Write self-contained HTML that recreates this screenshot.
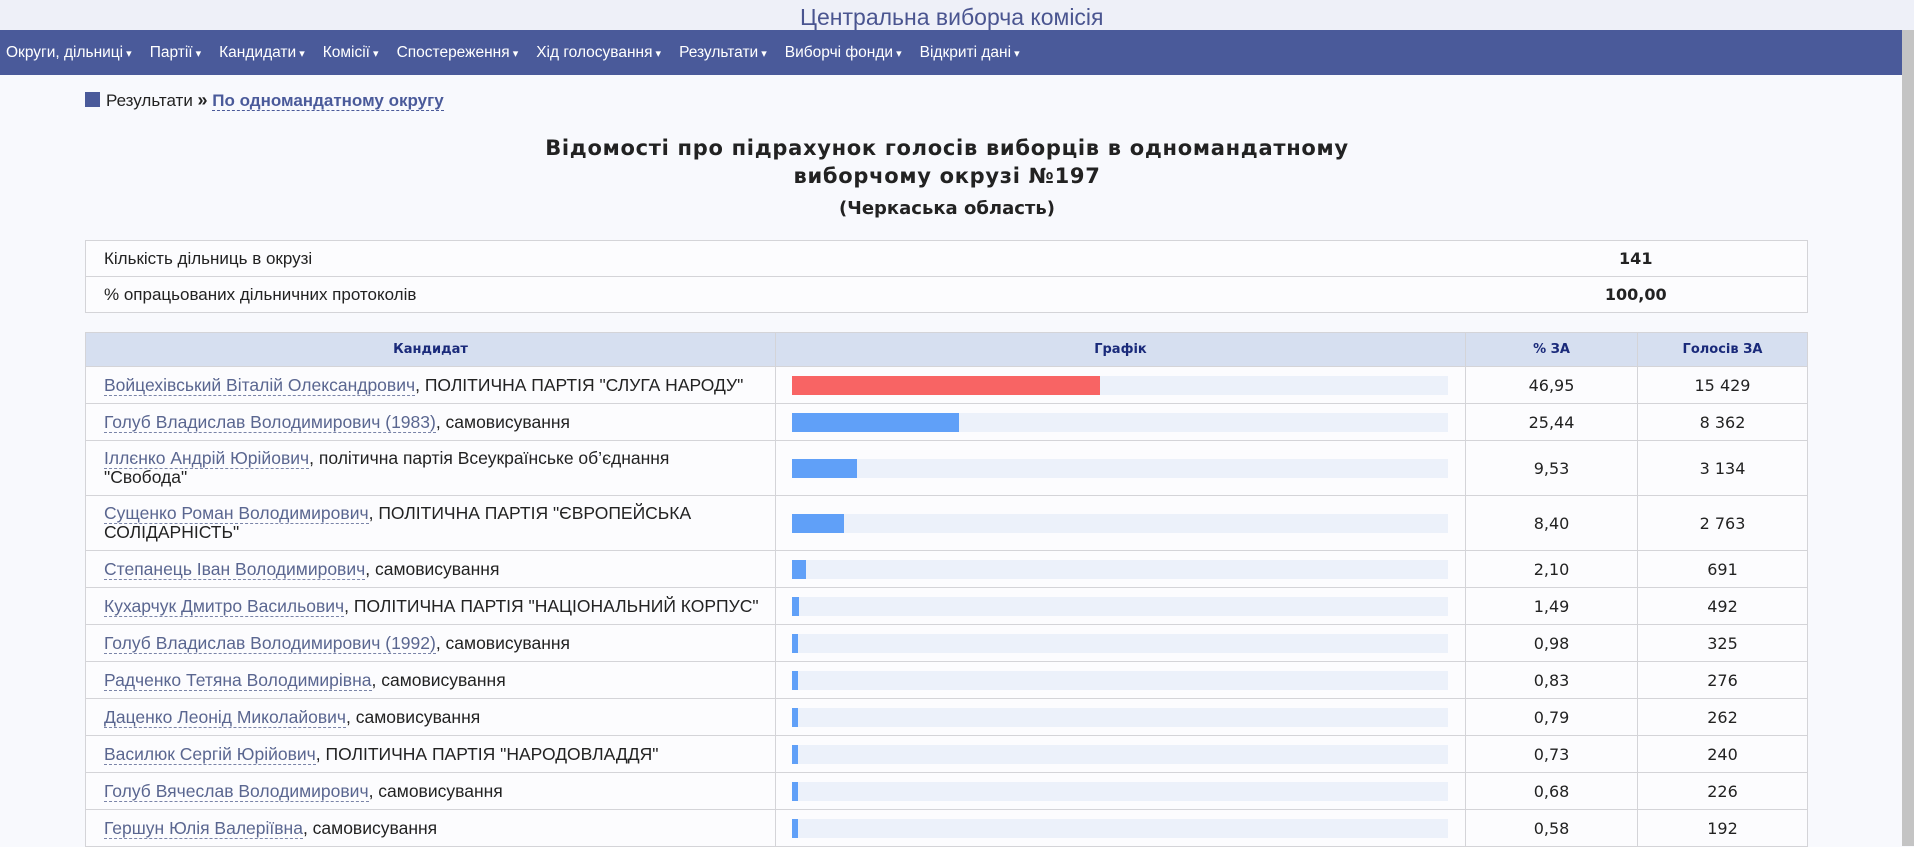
<!DOCTYPE html>
<html><head><meta charset="utf-8">
<style>
*{box-sizing:border-box;margin:0;padding:0}
body{width:1914px;height:846px;overflow:hidden;background:#f8f9fd;font-family:"Liberation Sans",sans-serif;color:#222;position:relative}
.top{height:30px;background:#eef0f8}
.top span{position:absolute;left:800px;top:1px;line-height:32px;font-size:23px;color:#4a5590}
.nav{position:absolute;top:30px;left:0;width:1902px;height:45px;background:#4a5a9a;color:#fff;font-size:15.5px;line-height:45px;padding-left:6px;white-space:nowrap}
.nav span{margin-right:18px}
.nav span:after{content:" ▾";font-size:11px}
.scroll{position:absolute;right:0;top:30px;width:12px;height:816px;background:#c4c4c4}
.bc{position:absolute;left:85px;top:90px;font-size:17px;color:#222}
.bc i{display:inline-block;width:15px;height:15px;background:#4a5a9a;vertical-align:-1px;margin-right:6px}
.bc b{font-size:18px}
.bc a{color:#4a5a9a;font-weight:bold;border-bottom:1px dashed #4a5a9a;text-decoration:none}
h1{position:absolute;left:0;width:1894px;top:134px;text-align:center;font-size:21px;line-height:28px;font-family:"DejaVu Sans",sans-serif;letter-spacing:0.7px}
h2{position:absolute;left:0;width:1894px;top:198px;text-align:center;font-size:18px;font-family:"DejaVu Sans",sans-serif}
table{position:absolute;left:85px;width:1723px;border-collapse:collapse;background:#fcfcfe;table-layout:fixed}
td,th{border:1px solid #d4d4d8}
.info{top:240px}
.info td{height:36px;font-size:17px;padding-left:18px;border-left:none;border-right:none}
.info td:first-child{border-left:1px solid #d4d4d8}
.info td.v{text-align:center;font-family:"DejaVu Sans",sans-serif;font-weight:bold;font-size:16px;padding:0;border-right:1px solid #d4d4d8}
.main{top:332px}
.main th{background:#d6dff0;color:#1a2a7a;font-family:"DejaVu Sans",sans-serif;font-size:13px;height:34px}
.main td{height:37px;font-size:17.5px;padding-left:18px;padding-right:10px;line-height:19px}
.main td.n{text-align:center;font-family:"DejaVu Sans",sans-serif;font-size:16px;padding:0;color:#222}
.main td.g{padding:0 16px}
.main a{color:#5a6690;text-decoration:none;border-bottom:1px dashed #7a84a8}
.tr{width:656px;height:19px;background:#ecf1fa}
.b{height:19px;background:#60a0f8}
tr.tall td{height:55px}
</style></head><body>
<div class="top"><span>Центральна виборча комісія</span></div>
<div class="nav"><span>Округи, дільниці</span><span>Партії</span><span>Кандидати</span><span>Комісії</span><span>Спостереження</span><span>Хід голосування</span><span>Результати</span><span>Виборчі фонди</span><span>Відкриті дані</span></div>
<div class="scroll"></div>
<div class="bc"><i></i>Результати <b>»</b> <a>По одномандатному округу</a></div>
<h1>Відомості про підрахунок голосів виборців в одномандатному<br>виборчому окрузі №197</h1>
<h2>(Черкаська область)</h2>
<table class="info">
<colgroup><col><col style="width:343px"></colgroup>
<tr><td>Кількість дільниць в окрузі</td><td class="v">141</td></tr>
<tr><td>% опрацьованих дільничних протоколів</td><td class="v">100,00</td></tr>
</table>
<table class="main">
<colgroup><col style="width:690px"><col style="width:690px"><col style="width:172px"><col></colgroup>
<tr><th>Кандидат</th><th>Графік</th><th>% ЗА</th><th>Голосів ЗА</th></tr>
<tr><td><a>Войцехівський Віталій Олександрович</a>, ПОЛІТИЧНА ПАРТІЯ "СЛУГА НАРОДУ"</td><td class="g"><div class="tr"><div class="b" style="width:46.95%;background:#f86464"></div></div></td><td class="n">46,95</td><td class="n">15 429</td></tr>
<tr><td><a>Голуб Владислав Володимирович (1983)</a>, самовисування</td><td class="g"><div class="tr"><div class="b" style="width:25.44%"></div></div></td><td class="n">25,44</td><td class="n">8 362</td></tr>
<tr class="tall"><td><a>Іллєнко Андрій Юрійович</a>, політична партія Всеукраїнське об’єднання<br>"Свобода"</td><td class="g"><div class="tr"><div class="b" style="width:9.9%"></div></div></td><td class="n">9,53</td><td class="n">3 134</td></tr>
<tr class="tall"><td><a>Сущенко Роман Володимирович</a>, ПОЛІТИЧНА ПАРТІЯ "ЄВРОПЕЙСЬКА<br>СОЛІДАРНІСТЬ"</td><td class="g"><div class="tr"><div class="b" style="width:8%"></div></div></td><td class="n">8,40</td><td class="n">2 763</td></tr>
<tr><td><a>Степанець Іван Володимирович</a>, самовисування</td><td class="g"><div class="tr"><div class="b" style="width:2.1%"></div></div></td><td class="n">2,10</td><td class="n">691</td></tr>
<tr><td><a>Кухарчук Дмитро Васильович</a>, ПОЛІТИЧНА ПАРТІЯ "НАЦІОНАЛЬНИЙ КОРПУС"</td><td class="g"><div class="tr"><div class="b" style="width:1%"></div></div></td><td class="n">1,49</td><td class="n">492</td></tr>
<tr><td><a>Голуб Владислав Володимирович (1992)</a>, самовисування</td><td class="g"><div class="tr"><div class="b" style="width:0.98%"></div></div></td><td class="n">0,98</td><td class="n">325</td></tr>
<tr><td><a>Радченко Тетяна Володимирівна</a>, самовисування</td><td class="g"><div class="tr"><div class="b" style="width:0.9%"></div></div></td><td class="n">0,83</td><td class="n">276</td></tr>
<tr><td><a>Даценко Леонід Миколайович</a>, самовисування</td><td class="g"><div class="tr"><div class="b" style="width:0.9%"></div></div></td><td class="n">0,79</td><td class="n">262</td></tr>
<tr><td><a>Василюк Сергій Юрійович</a>, ПОЛІТИЧНА ПАРТІЯ "НАРОДОВЛАДДЯ"</td><td class="g"><div class="tr"><div class="b" style="width:0.9%"></div></div></td><td class="n">0,73</td><td class="n">240</td></tr>
<tr><td><a>Голуб Вячеслав Володимирович</a>, самовисування</td><td class="g"><div class="tr"><div class="b" style="width:0.9%"></div></div></td><td class="n">0,68</td><td class="n">226</td></tr>
<tr><td><a>Гершун Юлія Валеріївна</a>, самовисування</td><td class="g"><div class="tr"><div class="b" style="width:0.9%"></div></div></td><td class="n">0,58</td><td class="n">192</td></tr>
</table>
</body></html>
